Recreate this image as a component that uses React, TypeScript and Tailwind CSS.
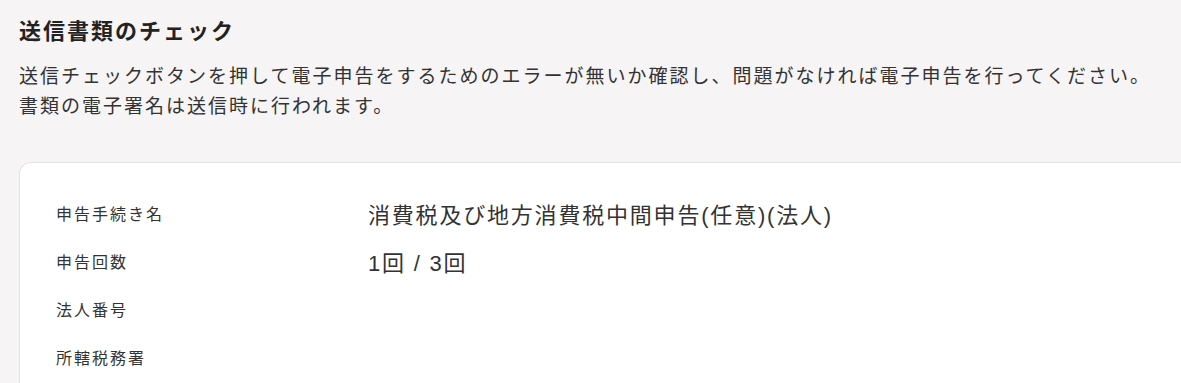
const rows: { label: string; value?: string }[] = [
  { label: '申告手続き名', value: '消費税及び地方消費税中間申告(任意)(法人)' },
  { label: '申告回数', value: '1回 / 3回' },
  { label: '法人番号' },
  { label: '所轄税務署' },
];

const font = { fontFamily: '"Liberation Sans", "Noto Sans CJK JP", sans-serif' };

export default function App() {
  return (
    <div className="min-h-[383px] overflow-hidden bg-[#f6f4f5] pl-[19px] pt-4 text-[#333]" style={font}>
      <h1 className="text-[22px] font-bold leading-8 tracking-[2px] text-[#222]">送信書類のチェック</h1>
      <p className="mt-[14px] text-[19px] leading-[30px] tracking-[2px]">
        送信チェックボタンを押して電子申告をするためのエラーが無いか確認し、問題がなければ電子申告を行ってください。
        <br />
        書類の電子署名は送信時に行われます。
      </p>
      <div className="mt-10 rounded-tl-xl border-l border-t border-[#e4e3e4] bg-white pl-[36px] pt-[28px] pb-6">
        {rows.map((r) => (
          <div key={r.label} className="flex h-12 items-center">
            <div className="w-[312px] shrink-0 text-[16px] tracking-[2px]">{r.label}</div>
            <div className="text-[22px] tracking-[1.8px]">{r.value}</div>
          </div>
        ))}
      </div>
    </div>
  );
}
